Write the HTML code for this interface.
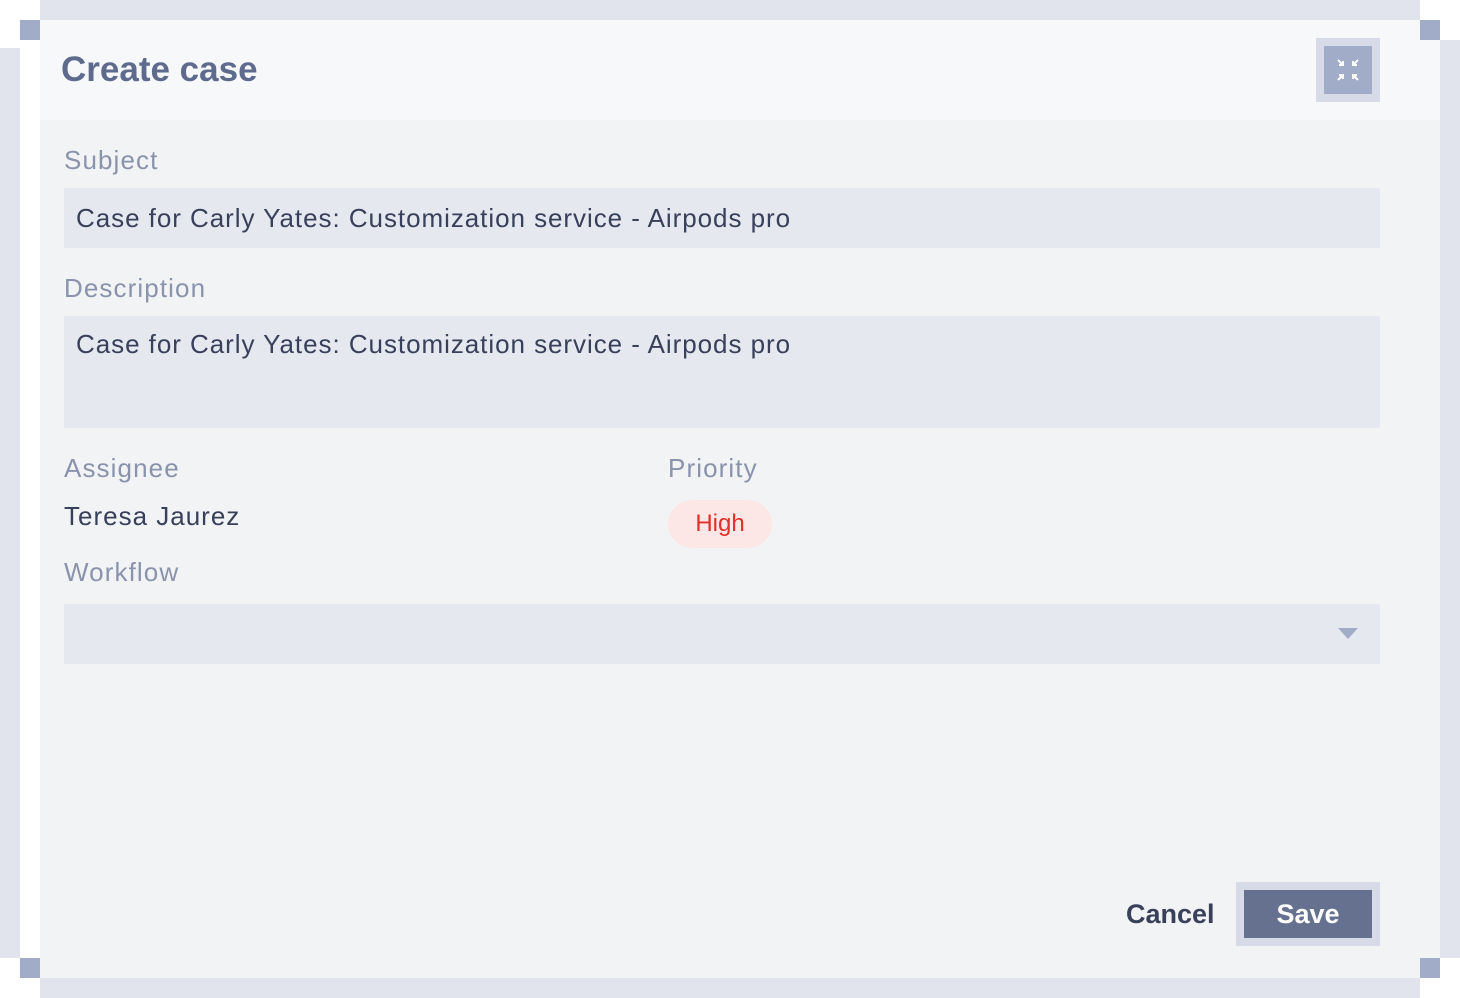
<!DOCTYPE html>
<html><head><style>
*{margin:0;padding:0;box-sizing:border-box}
body{width:1460px;height:998px;background:#fff;position:relative;overflow:hidden;font-family:"Liberation Sans",sans-serif}
.a{position:absolute}
.bar{background:#e1e4ed}
.sq{background:#a1acc8;width:20px;height:20px}
.lbl{position:absolute;font-size:26px;color:#8a93ac;letter-spacing:1.1px}
.inp{position:absolute;left:64px;width:1316px;background:#e6e8f0;font-size:26px;color:#38405a;padding-left:12px;letter-spacing:0.95px}
</style></head><body>
<div class="a bar" style="left:40px;top:0;width:1380px;height:20px"></div>
<div class="a bar" style="left:40px;top:978px;width:1380px;height:20px"></div>
<div class="a bar" style="left:0;top:48px;width:20px;height:910px"></div>
<div class="a bar" style="left:1440px;top:40px;width:20px;height:918px"></div>
<div class="a" style="left:40px;top:20px;width:1400px;height:958px;background:#f2f3f5"></div>
<div class="a" style="left:40px;top:20px;width:1400px;height:100px;background:#f7f8f9"></div>
<div class="a sq" style="left:20px;top:20px"></div>
<div class="a sq" style="left:1420px;top:20px"></div>
<div class="a sq" style="left:20px;top:958px"></div>
<div class="a sq" style="left:1420px;top:958px"></div>
<div class="a" style="left:61px;top:50px;font-size:35px;font-weight:bold;color:#5e6b8c">Create case</div>
<div class="a" style="left:1316px;top:38px;width:64px;height:64px;background:#d7dbe7"></div>
<div class="a" style="left:1324px;top:46px;width:48px;height:48px;background:#a1acc8">
<svg width="48" height="48" viewBox="0 0 48 48" fill="none" stroke="#fff" stroke-width="2"><path d="M14 14l5 5M19 15v4h-4M34 14l-5 5M29 15v4h4M14 34l5-5M15 29h4v4M34 34l-5-5M33 29h-4v4"/></svg></div>
<div class="lbl" style="left:64px;top:145px">Subject</div>
<div class="inp" style="top:188px;height:60px;line-height:60px">Case for Carly Yates: Customization service - Airpods pro</div>
<div class="lbl" style="left:64px;top:273px">Description</div>
<div class="inp" style="top:316px;height:112px;padding-top:13px">Case for Carly Yates: Customization service - Airpods pro</div>
<div class="lbl" style="left:64px;top:453px">Assignee</div>
<div class="a" style="left:64px;top:501px;font-size:26px;color:#38405a;letter-spacing:1px">Teresa Jaurez</div>
<div class="lbl" style="left:668px;top:453px">Priority</div>
<div class="a" style="left:668px;top:500px;width:104px;height:48px;border-radius:24px;background:#fde6e6;color:#e0302a;font-size:24px;text-align:center;line-height:48px">High</div>
<div class="lbl" style="left:64px;top:557px">Workflow</div>
<div class="inp" style="top:604px;height:60px"></div>
<div class="a" style="left:1338px;top:628px;width:0;height:0;border-left:10px solid transparent;border-right:10px solid transparent;border-top:11px solid #a1acc8"></div>
<div class="a" style="left:1126px;top:899px;font-size:27px;font-weight:bold;color:#38405a">Cancel</div>
<div class="a" style="left:1236px;top:882px;width:144px;height:64px;background:#d7dbe7"></div>
<div class="a" style="left:1244px;top:890px;width:128px;height:48px;background:#66718f;color:#fff;font-size:27px;font-weight:bold;text-align:center;line-height:48px">Save</div>
</body></html>
